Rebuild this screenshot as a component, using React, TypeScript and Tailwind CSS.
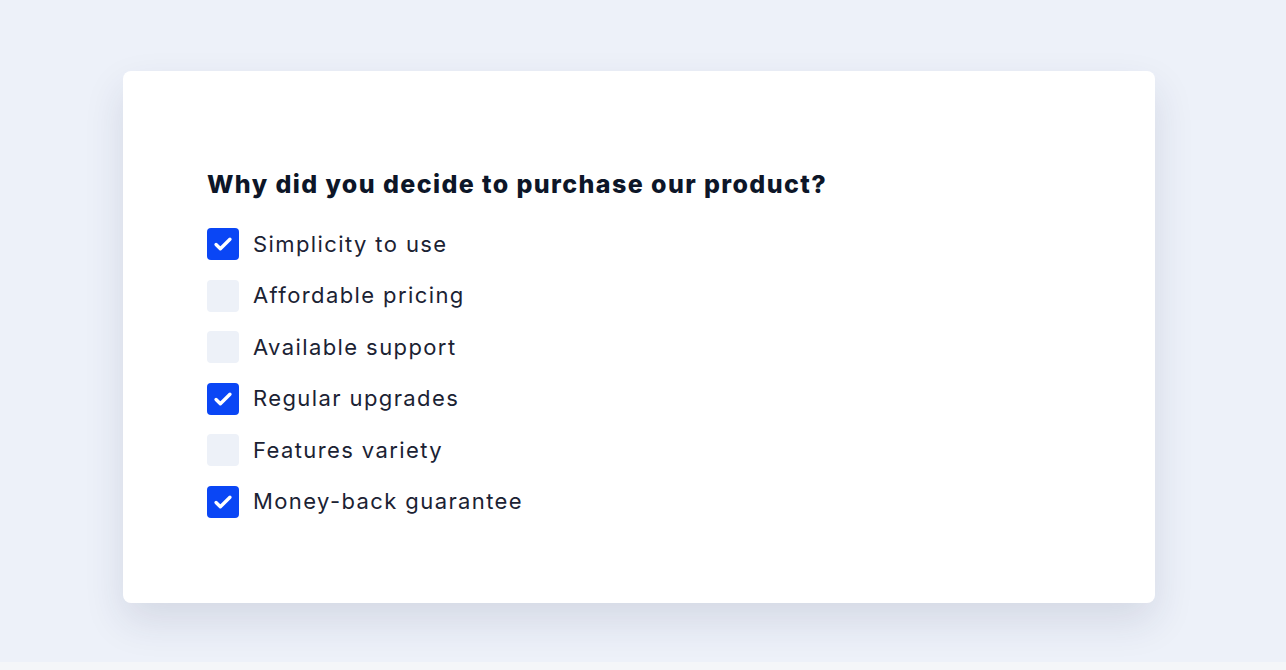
const options = [
  { label: "Simplicity to use", checked: true },
  { label: "Affordable pricing", checked: false },
  { label: "Available support", checked: false },
  { label: "Regular upgrades", checked: true },
  { label: "Features variety", checked: false },
  { label: "Money-back guarantee", checked: true },
];

function Check() {
  return (
    <svg width="24" height="24" viewBox="0 0 20 20" fill="none">
      <path
        d="M4.2 10.4l3.6 3.6L15.8 6"
        stroke="white"
        strokeWidth="2.8"
        strokeLinecap="round"
        strokeLinejoin="round"
      />
    </svg>
  );
}

export default function App() {
  return (
    <div className="min-h-[670px] bg-[#f4f6f9] font-['Inter',sans-serif]">
      <div className="h-[662px] bg-[#edf1f9] pt-[71px] pl-[123px]">
        <div className="h-[532px] w-[1032px] rounded-[8px] bg-white pl-[84px] pt-[96px] shadow-[0_18px_40px_rgba(30,45,80,0.12)]">
          <h1 className="text-[25px] leading-[34px] font-extrabold tracking-[1.4px] text-[#0d1628]">
            Why did you decide to purchase our product?
          </h1>
          <div className="mt-[27px] flex flex-col gap-[19.6px]">
            {options.map((o) => (
              <label key={o.label} className="flex h-8 items-center gap-[14px]">
                <span
                  className={
                    o.checked
                      ? "flex h-8 w-8 items-center justify-center rounded-[4px] bg-[#0a46f5]"
                      : "h-8 w-8 rounded-[4px] bg-[#edf1f8]"
                  }
                >
                  {o.checked && <Check />}
                </span>
                <span className="text-[22px] tracking-[1.4px] text-[#1b2233]">{o.label}</span>
              </label>
            ))}
          </div>
        </div>
      </div>
    </div>
  );
}
